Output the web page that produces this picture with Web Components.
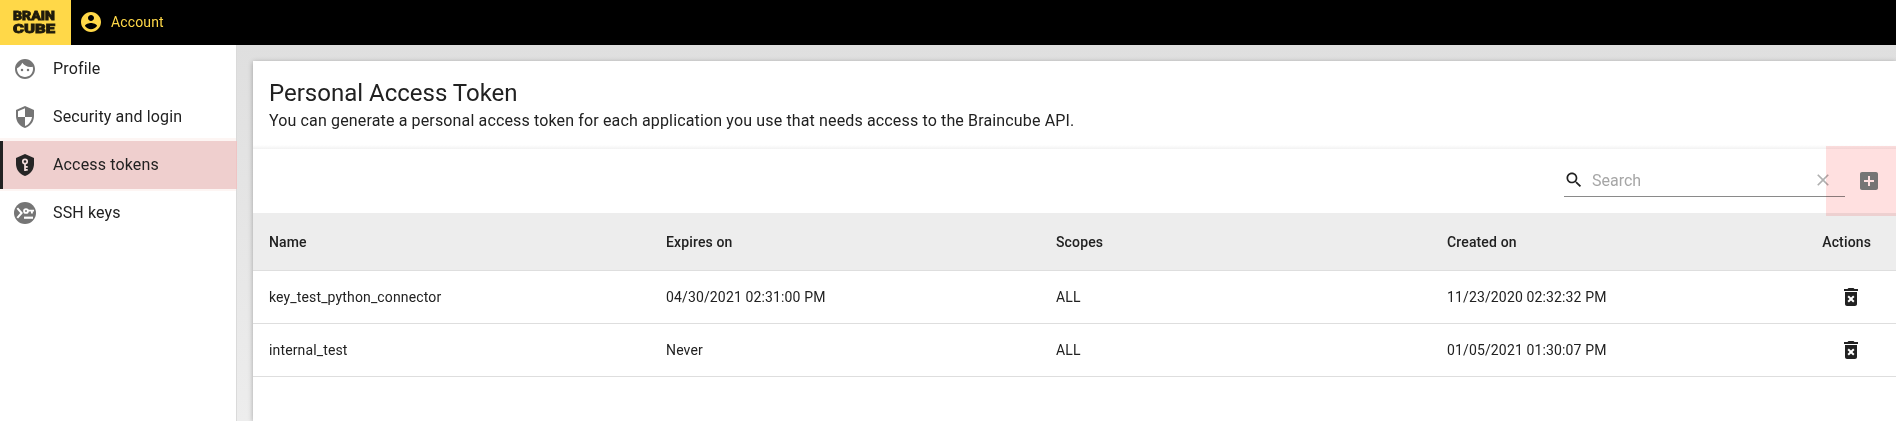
<!DOCTYPE html>
<html lang="en">
<head>
<meta charset="utf-8">
<title>Account</title>
<style>
html,body{margin:0;height:100%;overflow:hidden}
body{font-family:Roboto,"Liberation Sans",sans-serif;color:#212121;font-size:14px}
</style>
</head>
<body>
<account-app></account-app>
<script>
const ICONS = {
  account: '<path d="M12 2C6.48 2 2 6.48 2 12s4.480 10 10 10 10-4.480 10-10S17.520 2 12 2zm0 3c1.660 0 3 1.340 3 3s-1.340 3-3 3-3-1.340-3-3 1.340-3 3-3zm0 14.200c-2.500 0-4.710-1.280-6-3.220.030-1.990 4-3.080 6-3.080 1.990 0 5.970 1.090 6 3.080-1.290 1.940-3.500 3.220-6 3.220z"/>',
  face: '<path d="M9 11.750a1.250 1.250 0 1 0 0 2.500 1.250 1.250 0 0 0 0-2.500zm6 0a1.250 1.250 0 1 0 0 2.500 1.250 1.250 0 0 0 0-2.500zM12 2C6.480 2 2 6.480 2 12s4.480 10 10 10 10-4.480 10-10S17.520 2 12 2zm0 18c-4.410 0-8-3.590-8-8 0-.290.020-.580.050-.860 2.360-1.050 4.230-2.980 5.210-5.370C11.070 8.330 14.050 10 17.420 10c.780 0 1.530-.090 2.250-.260.210.710.330 1.470.330 2.260 0 4.410-3.590 8-8 8z"/>',
  shield: '<path d="M12 1L3 5v6c0 5.550 3.840 10.740 9 12 5.160-1.260 9-6.450 9-12V5l-9-4zm0 10.990h7c-.530 4.120-3.280 7.790-7 8.940V12H5V6.300l7-3.110v8.800z"/>',
  token: '<path d="M12 1L3 5v6c0 5.550 3.840 10.740 9 12 5.160-1.260 9-6.450 9-12V5z"/><g fill="none" stroke="var(--cut)" stroke-width="1.700"><circle cx="12" cy="8.500" r="2.200"/><path d="M12 10.500V18M12 13.900h2.700M12 16.900h2.700"/></g>',
  ssh: '<circle cx="12" cy="12" r="11"/><g fill="none" stroke="var(--cut)" stroke-width="1.900"><path d="M4.300 7.200L8.600 12l-4.300 4.800" stroke-width="2"/><path d="M11 16.700h9" stroke-width="2.200"/><circle cx="13" cy="10" r="1.900"/><path d="M15 9.600h6M18.900 9.600v3" /></g>',
  search: '<path d="M15.500 14h-.790l-.280-.270C15.410 12.590 16 11.110 16 9.500 16 5.910 13.090 3 9.500 3S3 5.910 3 9.500 5.910 16 9.500 16c1.610 0 3.090-.590 4.230-1.570l.270.280v.790l5 4.990L20.490 19l-4.990-5zm-6 0C7.010 14 5 11.990 5 9.500S7.010 5 9.500 5 14 7.010 14 9.500 11.990 14 9.500 14z"/>',
  close: '<path d="M19 6.410L17.590 5 12 10.590 6.410 5 5 6.410 10.590 12 5 17.590 6.410 19 12 13.410 17.590 19 19 17.590 13.410 12z"/>',
  add: '<path d="M19 3H5c-1.110 0-2 .900-2 2v14c0 1.100.890 2 2 2h14c1.100 0 2-.900 2-2V5c0-1.100-.900-2-2-2zm-2 10h-4v4h-2v-4H7v-2h4V7h2v4h4v2z"/>',
  trash: '<path fill-rule="evenodd" d="M5 4h3.500l1-1h5l1 1H19v2H5zM6 7h12v12c0 1.100-.900 2-2 2H8c-1.100 0-2-.900-2-2zM8.460 11.880L10.590 14l-2.120 2.120 1.410 1.410L12 15.410l2.120 2.120 1.410-1.410L13.410 14l2.120-2.120-1.410-1.410L12 12.590l-2.120-2.130z"/>'
};
const define = (name, html) => customElements.define(name, class extends HTMLElement {
  constructor() {
    super();
    const t = document.createElement('template');
    t.innerHTML = html;
    this.attachShadow({mode: 'open'}).append(t.content.cloneNode(true));
  }
});

customElements.define('ui-icon', class extends HTMLElement {
  connectedCallback() {
    if (this.shadowRoot) return;
    const s = this.getAttribute('size') || 24;
    this.attachShadow({mode: 'open'}).innerHTML = `<style>:host{display:block;flex:none;width:${s}px;height:${s}px}svg{display:block;width:100%;height:100%;fill:currentColor}</style><svg viewBox="0 0 24 24">${ICONS[this.getAttribute('name')]}</svg>`;
  }
});

define('brand-logo', `<style>:host{display:block;width:71px;height:45px;background:#ffd848}svg{display:block}
text{font:900 13px Roboto,sans-serif;fill:#1f1b0c;stroke:#1f1b0c;stroke-width:.8px}</style>
<svg width="71" height="45"><text transform="translate(13 20.300) scale(1 .960)" textLength="42" lengthAdjust="spacingAndGlyphs">BRAIN</text><text transform="translate(13 32.600) scale(1 1.040)" textLength="42" lengthAdjust="spacingAndGlyphs">CUBE</text></svg>`);

define('top-bar', `<style>:host{display:flex;height:45px;background:#000;color:#ffd848;align-items:center}
ui-icon{margin:0 8px;padding-bottom:1px}span{font-size:14px;letter-spacing:.14px;padding-bottom:2px}</style>
<brand-logo></brand-logo><ui-icon name="account"></ui-icon><span>Account</span>`);

customElements.define('nav-item', class extends HTMLElement {
  connectedCallback() {
    if (this.shadowRoot) return;
    this.attachShadow({mode: 'open'}).innerHTML = `<style>
:host{display:flex;box-sizing:border-box;height:48px;align-items:center;padding-left:13px;font-size:16px;letter-spacing:.15px;--cut:#fff}
:host([active]){background:#efcfce;border-left:3px solid #222;padding-left:10px;--cut:#f3dedd;box-shadow:0 -3px #fdf5f3,0 2px #fdf5f3,1px 0 #efc4c4}
ui-icon{color:#757575;margin-right:16px}:host([active]) ui-icon{color:#262626}span{padding-bottom:2px}</style>
<ui-icon name="${this.getAttribute('icon')}"></ui-icon><span><slot></slot></span>`;
  }
});

define('side-nav', `<style>:host{display:block;width:236px;background:#fff;box-shadow:1px 0 #dadada;position:relative}</style>
<nav-item icon="face">Profile</nav-item><nav-item icon="shield">Security and login</nav-item><nav-item icon="token" active>Access tokens</nav-item><nav-item icon="ssh">SSH keys</nav-item>`);

define('page-heading', `<style>:host{display:block;box-sizing:border-box;height:88px;padding:16px 16px 0;background:linear-gradient(#fff 84px,#f2f2f2)}
h1{margin:0;font-size:24px;line-height:32px;font-weight:400}p{margin:0;font-size:16px;line-height:24px;letter-spacing:.144px}</style>
<h1><slot name="title"></slot></h1><p><slot></slot></p>`);

define('search-bar', `<style>:host{display:flex;height:64px;position:relative;justify-content:flex-end;align-items:flex-start}
.field{display:flex;box-sizing:border-box;width:281px;height:34px;margin-top:14px;border-bottom:1px solid #8a8a8a;align-items:center;padding-top:1px}
.field span{flex:1;margin-left:8px;font-size:16px;color:#a6a6a6}.field ui-icon:last-child{color:#b0b0b0;margin-right:12px}
.add{color:#757575;margin:20px 15px 0 12px;position:relative;z-index:2}
.mark{position:absolute;right:0;top:-3px;width:70px;height:70px;background:#ffe0e0;mix-blend-mode:multiply;z-index:1}</style>
<div class="field"><ui-icon name="search" size="20"></ui-icon><span>Search</span><ui-icon name="close" size="20"></ui-icon></div>
<ui-icon class="add" name="add"></ui-icon><div class="mark"></div>`);

define('token-row', `<style>:host{display:grid;box-sizing:border-box;height:53px;grid-template-columns:397px 390px 391px 1fr auto;padding-left:16px;align-items:center;border-bottom:1px solid #dedede;font-size:14px;letter-spacing:.14px}
:host([head]){height:58px;background:#ededed;font-weight:500}
.action{display:flex;justify-content:flex-end;padding-right:33px}:host([head]) .action{padding-right:25px}</style>
<slot name="name"></slot><slot name="expires"></slot><slot name="scopes"></slot><slot name="created"></slot><div class="action"><slot><ui-icon name="trash"></ui-icon></slot></div>`);

define('token-card', `<style>:host{display:block;background:#fff;box-shadow:0 1px 5px rgba(0,0,0,.3)}</style>
<page-heading><span slot="title">Personal Access Token</span>You can generate a personal access token for each application you use that needs access to the Braincube API.</page-heading>
<search-bar></search-bar>
<token-row head><span slot="name">Name</span><span slot="expires">Expires on</span><span slot="scopes">Scopes</span><span slot="created">Created on</span><span>Actions</span></token-row>
<token-row><span slot="name">key_test_python_connector</span><span slot="expires">04/30/2021 02:31:00 PM</span><span slot="scopes">ALL</span><span slot="created">11/23/2020 02:32:32 PM</span></token-row>
<token-row><span slot="name">internal_test</span><span slot="expires">Never</span><span slot="scopes">ALL</span><span slot="created">01/05/2021 01:30:07 PM</span></token-row>`);

define('account-app', `<style>:host{display:flex;flex-direction:column;height:100vh}
main{flex:1;display:grid;grid-template-columns:236px 1fr;background:linear-gradient(#dfdfdf,#ededed)}
token-card{margin:16px 0 0 17px}</style>
<top-bar></top-bar><main><side-nav></side-nav><token-card></token-card></main>`);
</script>
</body>
</html>
